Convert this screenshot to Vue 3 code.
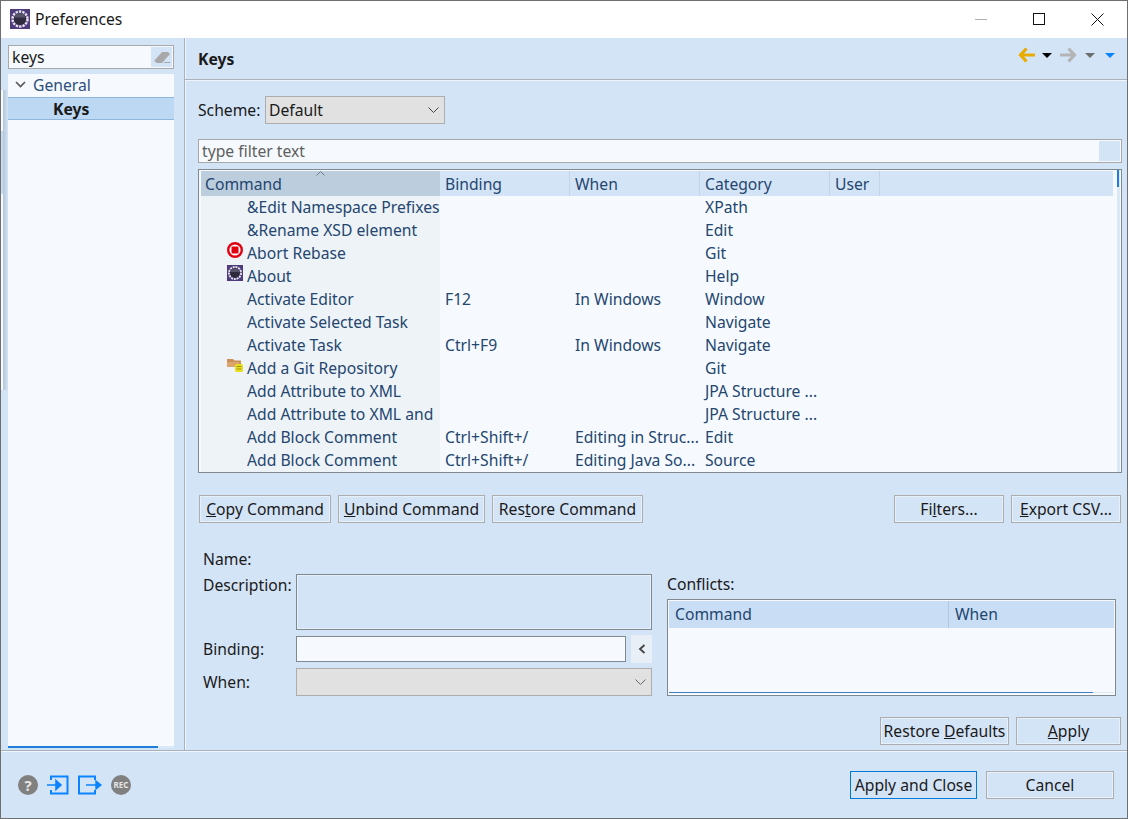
<template>
  <div class="window">
    <div class="ghost">
      <span class="ghost-band"></span>
    </div>
    <div class="titlebar">
      <svg class="app-icon" width="20" height="20" viewBox="0 0 20 20">
        <rect width="20" height="20" fill="#4e3b7c" />
        <circle cx="10" cy="10" r="7.5" fill="none" stroke="#e4e2ea" stroke-width="2.4" stroke-dasharray="2.4 1" />
        <circle cx="10" cy="10" r="6" fill="#2f2b3d" />
        <path d="M4.5 8.5a5.6 5.6 0 0 1 11 0z" fill="#57536b" />
      </svg>
      <span class="title">Preferences</span>
      <div class="win-controls">
        <span class="win-min"></span>
        <span class="win-max"></span>
        <svg width="13" height="13" viewBox="0 0 13 13"><path d="M.5.5l12 12M12.5.5l-12 12" stroke="#111" fill="none" /></svg>
      </div>
    </div>

    <div class="main">
      <aside class="sidebar">
        <div class="search">
          <span>keys</span>
          <span class="search-clear">
            <svg width="18" height="14" viewBox="0 0 18 14"><path d="M1 11l8-9h6l2 2-8 9H4z" fill="#a8a8a8" /><path d="M11 12.500h6" stroke="#a8a8a8" /></svg>
          </span>
        </div>
        <div class="tree">
          <div class="tree-row general">
            <svg class="chevron" width="11" height="7" viewBox="0 0 11 7"><path d="M1 1l4.500 4.500L10 1" fill="none" stroke="#555" stroke-width="1.600" /></svg>
            General
          </div>
          <div class="tree-row selected">Keys</div>
          <div class="tree-scroll"><span></span></div>
        </div>
      </aside>

      <section class="content">
        <header class="page-head">
          <h1>Keys</h1>
          <div class="nav-icons">
            <svg width="17" height="16" viewBox="0 0 17 16"><path d="M8.500 1.500L2.500 8l6 6.500M3 8h14" fill="none" stroke="#e8ab00" stroke-width="3.200" /></svg>
            <span class="tri black"></span>
            <svg class="fwd" width="17" height="16" viewBox="0 0 17 16"><path d="M8.500 1.500l6 6.500-6 6.500M14 8H0" fill="none" stroke="#b4b4b4" stroke-width="3.200" /></svg>
            <span class="tri gray"></span>
            <span class="tri blue"></span>
          </div>
        </header>

        <div class="page-body">
          <div class="scheme-row">
            <label>Scheme:</label>
            <div class="combo">
              <span>Default</span>
              <svg width="11" height="6" viewBox="0 0 11 6"><path d="M.5.500l5 5 5-5" fill="none" stroke="#444" /></svg>
            </div>
          </div>

          <div class="filter">
            <span>type filter text</span>
            <span class="filter-clear"></span>
          </div>

          <div class="table">
            <div class="thead">
              <div class="th col-command sorted">
                Command
                <svg class="sort" width="9" height="5" viewBox="0 0 9 5"><path d="M.5 4.500l4-4 4 4" fill="none" stroke="#777" /></svg>
              </div>
              <div class="th col-binding">Binding</div>
              <div class="th col-when">When</div>
              <div class="th col-category">Category</div>
              <div class="th col-user">User</div>
            </div>
            <div v-for="row in rows" :key="row.name + row.category" class="tr">
              <div class="td col-command">
                <svg v-if="row.icon === 'stop'" class="row-icon" width="16" height="16" viewBox="0 0 16 16">
                  <circle cx="8" cy="8" r="6.800" fill="#fff" stroke="#e0000f" stroke-width="2.400" />
                  <rect x="4.500" y="4.500" width="7" height="7" rx="1" fill="#e0000f" />
                </svg>
                <svg v-else-if="row.icon === 'about'" class="row-icon" width="16" height="16" viewBox="0 0 16 16">
                  <rect width="16" height="16" fill="#4e3b7c" />
                  <circle cx="8" cy="8" r="6" fill="none" stroke="#e4e2ea" stroke-width="2" stroke-dasharray="2 .8" />
                  <circle cx="8" cy="8" r="4.800" fill="#2f2b3d" />
                  <path d="M3.600 7a4.500 4.500 0 0 1 8.800 0z" fill="#57536b" />
                </svg>
                <svg v-else-if="row.icon === 'git'" class="row-icon" width="16" height="16" viewBox="0 0 16 16">
                  <path d="M0 2h6l1.500 1.500H14V9H0z" fill="#c98f55" />
                  <path d="M0 5h12v5H0z" fill="#dca56c" />
                  <rect x="8" y="7" width="8" height="8" rx="1.500" fill="#e8df1e" />
                  <path d="M9.500 9.500h5M9.500 12h5" stroke="#9c9412" />
                </svg>
                <span class="cmd-name">{{ row.name }}</span>
              </div>
              <div class="td col-binding">{{ row.binding }}</div>
              <div class="td col-when">{{ row.when }}</div>
              <div class="td col-category">{{ row.category }}</div>
            </div>
            <div class="table-scroll"><span></span></div>
          </div>

          <div class="cmd-buttons">
            <button class="btn copy"><u>C</u>opy Command</button>
            <button class="btn unbind"><u>U</u>nbind Command</button>
            <button class="btn restore-cmd">Res<u>t</u>ore Command</button>
            <div class="spacer"></div>
            <button class="btn filters">Fi<u>l</u>ters...</button>
            <button class="btn export"><u>E</u>xport CSV...</button>
          </div>

          <div class="details">
            <div class="form">
              <div class="name-label">Name:</div>
              <div class="form-row desc-row">
                <label>Description:</label>
                <div class="desc-box"></div>
              </div>
              <div class="form-row binding-row">
                <label>Binding:</label>
                <div class="binding-box"></div>
                <span class="binding-btn">
                  <svg width="8" height="10" viewBox="0 0 8 10"><path d="M6.500 1L2 5l4.500 4" fill="none" stroke="#444" stroke-width="1.800" /></svg>
                </span>
              </div>
              <div class="form-row when-row">
                <label>When:</label>
                <div class="when-box">
                  <svg width="11" height="6" viewBox="0 0 11 6"><path d="M.5.500l5 5 5-5" fill="none" stroke="#666" /></svg>
                </div>
              </div>
            </div>
            <div class="conflicts">
              <div class="conflicts-label">Conflicts:</div>
              <div class="conflicts-table">
                <div class="conflicts-head">
                  <div class="cth cth-command">Command</div>
                  <div class="cth">When</div>
                </div>
                <div class="conflicts-scroll"><span></span></div>
              </div>
            </div>
          </div>

          <div class="page-buttons">
            <button class="btn restore">Restore <u>D</u>efaults</button>
            <button class="btn apply"><u>A</u>pply</button>
          </div>
        </div>
      </section>
    </div>

    <footer class="footer">
      <div class="footer-icons">
        <svg width="20" height="20" viewBox="0 0 20 20">
          <circle cx="10" cy="10" r="10" fill="#808080" />
          <text x="10" y="15.500" text-anchor="middle" class="help-mark">?</text>
        </svg>
        <svg width="22" height="20" viewBox="0 0 22 20">
          <path d="M4 5V1.500h16.500v17H4V15" fill="none" stroke="#0a84ff" stroke-width="2" />
          <path d="M0 10h11M9 5.500l5 4.500-5 4.500z" fill="#0a84ff" stroke="#0a84ff" stroke-width="1.600" />
        </svg>
        <svg width="24" height="20" viewBox="0 0 24 20">
          <path d="M17 5V1.500H1v17h16V15" fill="none" stroke="#0a84ff" stroke-width="2" />
          <path d="M8 10h11M18 6l5 4-5 4z" fill="#0a84ff" stroke="#0a84ff" stroke-width="1.400" />
        </svg>
        <svg width="20" height="20" viewBox="0 0 20 20">
          <circle cx="10" cy="10" r="10" fill="#808080" />
          <text x="10" y="12.800" text-anchor="middle" class="rec-mark">REC</text>
        </svg>
      </div>
      <div class="footer-buttons">
        <button class="btn primary">Apply and Close</button>
        <button class="btn cancel">Cancel</button>
      </div>
    </footer>
  </div>
</template>

<script setup>
const rows = [
  { name: '&Edit Namespace Prefixes', binding: '', when: '', category: 'XPath' },
  { name: '&Rename XSD element', binding: '', when: '', category: 'Edit' },
  { name: 'Abort Rebase', binding: '', when: '', category: 'Git', icon: 'stop' },
  { name: 'About', binding: '', when: '', category: 'Help', icon: 'about' },
  { name: 'Activate Editor', binding: 'F12', when: 'In Windows', category: 'Window' },
  { name: 'Activate Selected Task', binding: '', when: '', category: 'Navigate' },
  { name: 'Activate Task', binding: 'Ctrl+F9', when: 'In Windows', category: 'Navigate' },
  { name: 'Add a Git Repository', binding: '', when: '', category: 'Git', icon: 'git' },
  { name: 'Add Attribute to XML', binding: '', when: '', category: 'JPA Structure ...' },
  { name: 'Add Attribute to XML and', binding: '', when: '', category: 'JPA Structure ...' },
  { name: 'Add Block Comment', binding: 'Ctrl+Shift+/', when: 'Editing in Struc...', category: 'Edit' },
  { name: 'Add Block Comment', binding: 'Ctrl+Shift+/', when: 'Editing Java So...', category: 'Source' }
]
</script>

<style>
html, body { margin: 0; padding: 0; }
</style>

<style scoped>
* { box-sizing: border-box; }

.window {
  position: relative;
  width: 1128px;
  height: 819px;
  display: flex;
  flex-direction: column;
  background: #d4e4f7;
  border: 1px solid #6f6f6f;
  font-family: "Noto Sans", sans-serif;
  font-size: 15.7px;
  color: #1a1a1a;
  overflow: hidden;
}

/* sliver of the window behind, shows through on the left edge */
.ghost {
  position: absolute;
  left: 0;
  top: 89px;
  width: 7px;
  height: 300px;
  background: linear-gradient(to right, #f6fafe 0 2px, #b4c6d8 2px, #d4e4f7 100%);
}
.ghost-band {
  display: block;
  width: 2px;
  height: 63px;
  margin-top: 41px;
  background: #c8dcf2;
}

.titlebar {
  height: 37px;
  flex: none;
  display: flex;
  align-items: center;
  background: #fff;
  padding: 0 0 1px 9px;
}
.app-icon { flex: none; }
.title { margin-left: 5px; }
.win-controls {
  margin-left: auto;
  display: flex;
  align-items: center;
  gap: 46px;
  padding-right: 23px;
}
.win-min { width: 12px; height: 1px; background: #b0b0b0; }
.win-max { width: 12px; height: 12px; border: 1px solid #111; }

.main { flex: 1; display: flex; min-height: 0; }

.sidebar {
  width: 184px;
  flex: none;
  border-right: 1px solid #a9b2bc;
  box-shadow: 1px 0 0 #eef5fd;
  padding: 7px 10px 2px 7px;
  display: flex;
  flex-direction: column;
}
.search {
  height: 24px;
  flex: none;
  display: flex;
  align-items: center;
  justify-content: space-between;
  padding-left: 3px;
  background: #f6fafe;
  border: 1px solid #a8a8a8;
}
.search-clear {
  width: 21px;
  height: 20px;
  margin-right: 1px;
  display: flex;
  align-items: center;
  justify-content: center;
  background: #d4e4f7;
}
.tree {
  flex: 1;
  margin-top: 5px;
  background: #f6fafe;
  display: flex;
  flex-direction: column;
}
.tree-row {
  height: 23px;
  display: flex;
  align-items: center;
  color: #2d4f7c;
}
.tree-row.general { padding-bottom: 2px; }
.chevron { margin: 0 7px; }
.tree-row.selected {
  padding-left: 45px;
  font-weight: 700;
  color: #1a1a1a;
  background: #bdd8f2;
  border-top: 1px solid #8fb6dc;
  border-bottom: 1px solid #8fb6dc;
}
.tree-scroll {
  margin-top: auto;
  height: 2px;
  background: #dbe9f7;
}
.tree-scroll span {
  display: block;
  width: 150px;
  height: 2px;
  background: #1f7fd8;
}

.content { flex: 1; display: flex; flex-direction: column; min-width: 0; }

.page-head {
  height: 42px;
  flex: none;
  display: flex;
  justify-content: space-between;
  padding: 11px 12px 0 13px;
  border-bottom: 1px solid #a9b2bc;
  box-shadow: 0 1px 0 #eef5fd;
}
.page-head h1 {
  margin: 0;
  font-size: 15.7px;
  font-weight: 700;
  line-height: 21px;
}
.nav-icons {
  display: flex;
  align-items: flex-start;
  height: 16px;
  margin-top: -2px;
}
.tri {
  width: 0;
  height: 0;
  margin-top: 6px;
  border-left: 5px solid transparent;
  border-right: 5px solid transparent;
  border-top: 5px solid #000;
}
.tri.black { margin-left: 7px; }
.fwd { margin-left: 8px; }
.tri.gray { margin-left: 8px; border-top-color: #6e6e6e; }
.tri.blue { margin-left: 10px; border-top-color: #0a84ff; }

.page-body {
  flex: 1;
  padding: 16px 5px 0 13px;
  display: flex;
  flex-direction: column;
  min-height: 0;
}

.scheme-row {
  display: flex;
  align-items: center;
  height: 28px;
  flex: none;
}
.scheme-row label { width: 67px; flex: none; }
.combo {
  width: 180px;
  height: 28px;
  display: flex;
  align-items: center;
  justify-content: space-between;
  padding: 0 5px 0 3px;
  background: #e1e1e1;
  border: 1px solid #adadad;
}

.filter {
  margin-top: 15px;
  height: 24px;
  flex: none;
  display: flex;
  align-items: center;
  justify-content: space-between;
  padding-left: 3px;
  background: #f6fafe;
  border: 1px solid #a8a8a8;
  color: #5f5f5f;
}
.filter-clear {
  width: 21px;
  height: 20px;
  margin-right: 1px;
  background: #d4e4f7;
}

.table {
  position: relative;
  margin-top: 6px;
  height: 304px;
  flex: none;
  padding: 1px 8px 0 2px;
  background: #f6fafe;
  border: 1px solid #808890;
  overflow: hidden;
}
.thead { display: flex; height: 25px; background: #d4e4f7; }
.th {
  display: flex;
  align-items: center;
  padding-left: 5px;
  color: #24466f;
  border-right: 1px solid #c3d4e6;
}
.th.sorted { position: relative; background: #bccdde; padding-left: 4px; border-right: none; }
.sort { position: absolute; left: 115px; top: 0; }
.col-command { width: 239px; flex: none; }
.col-binding { width: 130px; flex: none; }
.col-when { width: 130px; flex: none; }
.col-category { width: 130px; flex: none; }
.col-user { width: 50px; flex: none; }

.tr { display: flex; height: 23px; }
.td {
  display: flex;
  align-items: center;
  padding: 0 0 1px 5px;
  color: #24466f;
  white-space: nowrap;
  overflow: hidden;
}
.td.col-command {
  position: relative;
  padding-left: 46px;
  background: #eef3f8;
}
.cmd-name { display: block; }
.row-icon { position: absolute; left: 26px; top: 0; }

.table-scroll {
  position: absolute;
  top: 0;
  right: 1px;
  bottom: 0;
  width: 3px;
  background: #dbe9f7;
}
.table-scroll span {
  display: block;
  width: 2px;
  height: 17px;
  background: #1f7fd8;
}

.btn {
  height: 28px;
  padding: 0;
  background: #d4e4f7;
  border: 1px solid #adadad;
  box-shadow: inset 0 0 0 1px #e6f0fb;
  font-family: inherit;
  font-size: 15.7px;
  color: #1a1a1a;
  text-align: center;
  white-space: nowrap;
}

.cmd-buttons {
  margin-top: 22px;
  display: flex;
  flex: none;
  height: 28px;
  padding: 0 1px;
  gap: 7px;
}
.btn.copy { width: 132px; }
.btn.unbind { width: 147px; }
.btn.restore-cmd { width: 151px; }
.spacer { flex: 1; }
.btn.filters { width: 110px; }
.btn.export { width: 110px; }

.details {
  margin-top: 24px;
  display: flex;
  flex: none;
  padding-left: 5px;
  padding-right: 6px;
}
.form { width: 449px; flex: none; }
.name-label { height: 27px; line-height: 24px; }
.form-row { display: flex; }
.form-row label { width: 93px; flex: none; }
.desc-row { height: 56px; }
.desc-row label { line-height: 22px; }
.desc-box { width: 356px; height: 56px; border: 1px solid #808890; box-shadow: inset 0 0 0 1px #e6f0fb; }
.binding-row { margin-top: 6px; height: 26px; align-items: center; }
.binding-box { width: 330px; height: 26px; background: #f6fafe; border: 1px solid #808890; }
.binding-btn {
  width: 21px;
  height: 28px;
  margin-left: 5px;
  display: flex;
  align-items: center;
  justify-content: center;
  background: #e8eff7;
}
.when-row { margin-top: 6px; height: 28px; align-items: center; }
.when-box {
  width: 356px;
  height: 28px;
  display: flex;
  align-items: center;
  justify-content: flex-end;
  padding-right: 5px;
  background: #e1e1e1;
  border: 1px solid #adadad;
}

.conflicts { margin-left: 15px; flex: 1; padding-top: 26px; }
.conflicts-label { height: 26px; line-height: 22px; }
.conflicts-table {
  position: relative;
  height: 97px;
  background: #f6fafe;
  border: 1px solid #808890;
  padding: 1px 1px 0;
}
.conflicts-head { display: flex; height: 27px; background: #c9def5; color: #24466f; }
.cth { padding-left: 6px; line-height: 27px; }
.cth-command { width: 280px; border-right: 1px solid #b3c8df; }
.conflicts-scroll {
  position: absolute;
  left: 1px;
  right: 1px;
  bottom: 2px;
  height: 1px;
  background: #dbe9f7;
}
.conflicts-scroll span { display: block; width: 424px; height: 1px; background: #3f7fc0; }

.page-buttons {
  margin-top: 21px;
  padding-right: 1px;
  display: flex;
  justify-content: flex-end;
  gap: 7px;
  flex: none;
}
.btn.restore { width: 129px; }
.btn.apply { width: 105px; }

.footer {
  height: 68px;
  flex: none;
  display: flex;
  align-items: flex-start;
  justify-content: space-between;
  border-top: 1px solid #a9b2bc;
  box-shadow: inset 0 1px 0 #eef5fd;
  padding: 20px 13px 0 17px;
}
.footer-icons { display: flex; align-items: center; gap: 9px; height: 28px; }
.help-mark { font: 700 15px "Noto Sans", sans-serif; fill: #e6e6e6; }
.rec-mark { font: 700 8px "Noto Sans", sans-serif; fill: #e6e6e6; }
.footer-buttons { display: flex; gap: 9px; }
.btn.primary { width: 127px; border-color: #0078d7; box-shadow: none; }
.btn.cancel { width: 128px; }
</style>
